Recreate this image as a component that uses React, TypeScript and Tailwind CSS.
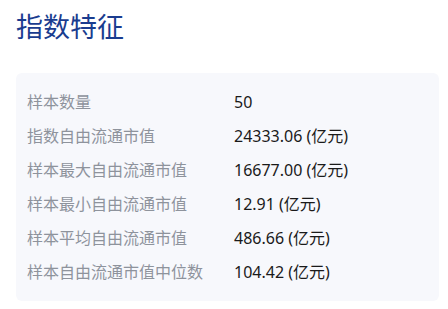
const rows: [string, string][] = [
  ["样本数量", "50"],
  ["指数自由流通市值", "24333.06 (亿元)"],
  ["样本最大自由流通市值", "16677.00 (亿元)"],
  ["样本最小自由流通市值", "12.91 (亿元)"],
  ["样本平均自由流通市值", "486.66 (亿元)"],
  ["样本自由流通市值中位数", "104.42 (亿元)"],
];

export default function App() {
  return (
    <div
      className="w-[448px] h-[309px] bg-white px-4 pt-[9px]"
      style={{ fontFamily: '"Noto Sans", "Noto Sans CJK SC", sans-serif' }}
    >
      <h1 className="text-[27px] leading-[36px] text-[#1a3c8f]">指数特征</h1>

      {/* 指标列表 */}
      <div className="mt-[28px] w-[423px] rounded-md bg-[#f7f8fc] px-[11px] py-3">
        {rows.map(([label, value]) => (
          <div key={label} className="flex h-[34px] items-center text-[16px]">
            <span className="w-[207px] text-[#8e939c]">{label}</span>
            <span className="text-[#1a1a1a]">{value}</span>
          </div>
        ))}
      </div>
    </div>
  );
}
